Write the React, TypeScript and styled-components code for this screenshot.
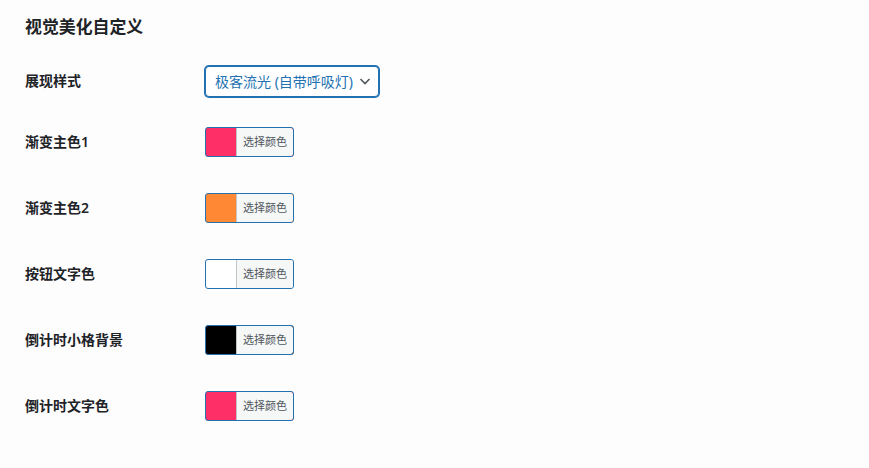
import styled, { createGlobalStyle } from 'styled-components';

const GlobalStyle = createGlobalStyle`
  html, body {
    margin: 0;
    padding: 0;
    background: #fdfdfd;
  }
  body {
    font-family: "Noto Sans", "Noto Sans CJK SC", sans-serif;
    color: #1d2327;
  }
`;

const colorFields = [
  { id: 1, label: '渐变主色1', color: '#fe2f66' },
  { id: 2, label: '渐变主色2', color: '#fe8833' },
  { id: 3, label: '按钮文字色', color: '#ffffff' },
  { id: 4, label: '倒计时小格背景', color: '#000000' },
  { id: 5, label: '倒计时文字色', color: '#fe2f66' },
];

export default function App() {
  return (
    <>
      <GlobalStyle />
      <Page>
        <Title>视觉美化自定义</Title>
        <Table>
          <Row>
            <Label>展现样式</Label>
            <SelectWrap>
              <Select defaultValue="1">
                <option value="1">极客流光 (自带呼吸灯)</option>
              </Select>
              <Chevron width="14" height="14" viewBox="0 0 14 14">
                <path d="M2.5 5l4.5 4.5 4.5-4.5" fill="none" stroke="#50575e" strokeWidth="1.6" />
              </Chevron>
            </SelectWrap>
          </Row>
          {colorFields.map((field) => (
            <Row key={field.id} $extra>
              <Label>{field.label}</Label>
              <ColorButton type="button" $color={field.color}>
                <ColorText>选择颜色</ColorText>
              </ColorButton>
            </Row>
          ))}
        </Table>
      </Page>
    </>
  );
}

const Page = styled.div`
  width: 869px;
  height: 468px;
  box-sizing: border-box;
  padding: 0 25px;
  overflow: hidden;
`;

const Title = styled.h2`
  margin: 17px 0 14px;
  font-size: 16.9px;
  line-height: 20px;
  font-weight: 600;
  color: #1d2327;
`;

const Table = styled.div`
  display: flex;
  flex-direction: column;
`;

const Row = styled.div<{ $extra?: boolean }>`
  display: flex;
  align-items: flex-start;
  padding: 15px 0 ${(p) => (p.$extra ? '21px' : '15px')};
`;

const Label = styled.div`
  width: 180px;
  padding-top: 6px;
  font-size: 14px;
  line-height: 18px;
  font-weight: 600;
  color: #1d2327;
`;

const SelectWrap = styled.div`
  position: relative;
  display: inline-block;
`;

const Select = styled.select`
  appearance: none;
  -webkit-appearance: none;
  width: 174px;
  height: 31px;
  box-sizing: border-box;
  padding: 0 24px 0 9px;
  border: 1px solid #2271b1;
  border-radius: 4px;
  box-shadow: 0 0 0 1px #2271b1;
  background: #ffffff;
  color: #2271b1;
  font-family: "Noto Sans", "Noto Sans CJK SC", sans-serif;
  font-size: 14px;
  line-height: 2;
  outline: none;
`;

const Chevron = styled.svg`
  position: absolute;
  right: 7px;
  top: 8px;
  pointer-events: none;
`;

const ColorButton = styled.button<{ $color: string }>`
  display: flex;
  height: 30px;
  box-sizing: border-box;
  margin: 0;
  padding: 0 0 0 30px;
  border: 1px solid #2271b1;
  border-radius: 3px;
  background: ${(p) => p.$color};
  cursor: pointer;
  overflow: hidden;
`;

const ColorText = styled.span`
  display: block;
  height: 28px;
  padding: 0 6px;
  border-left: 1px solid #c3c4c7;
  border-radius: 0 2px 2px 0;
  background: #f6f7f7;
  color: #50575e;
  font-family: "Noto Sans", "Noto Sans CJK SC", sans-serif;
  font-size: 11px;
  line-height: 28px;
`;
